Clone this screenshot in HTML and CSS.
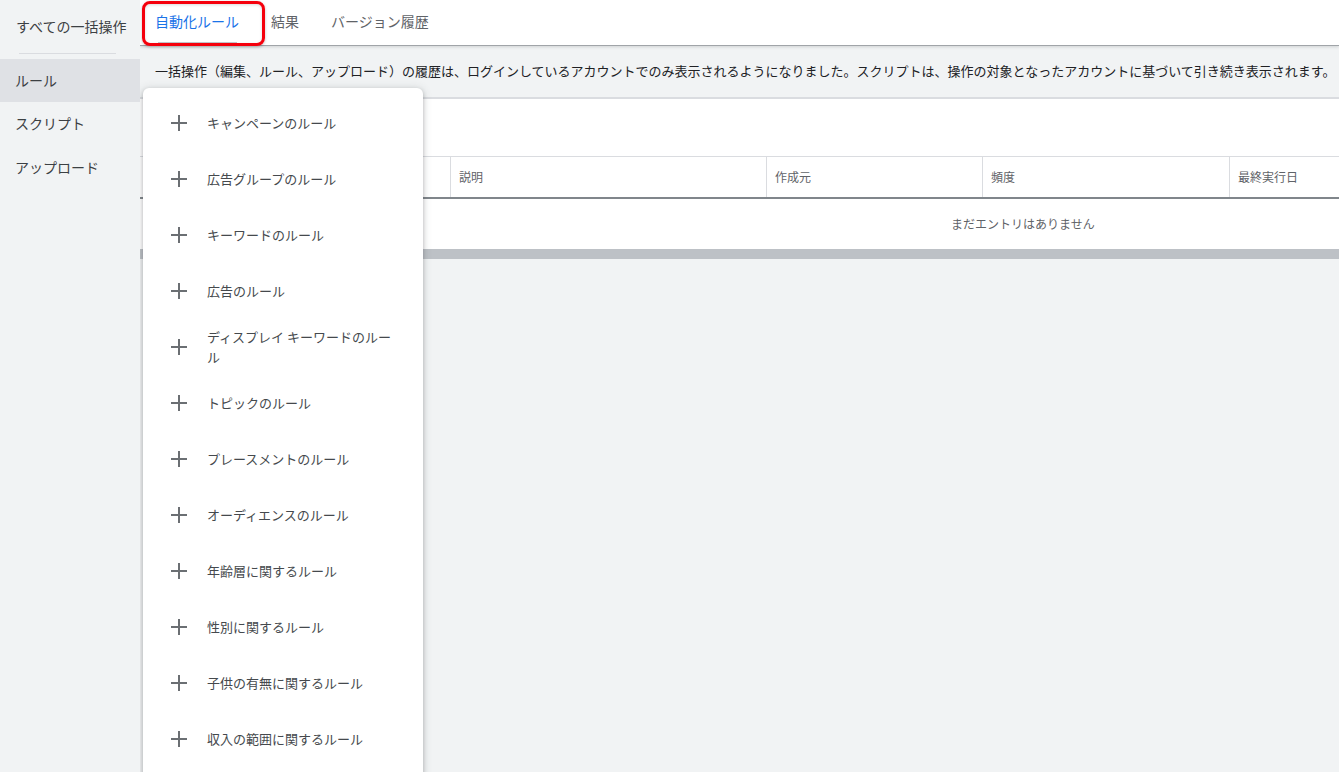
FILE: index.html
```html
<!DOCTYPE html>
<html lang="ja">
<head>
<meta charset="utf-8">
<title>一括操作 - ルール</title>
<link rel="stylesheet" href="styles.css">
</head>
<body>
<div class="app">
  <aside class="sidebar">
    <div class="side-title">すべての一括操作</div>
    <div class="side-divider"></div>
    <div class="side-item selected">ルール</div>
    <div class="side-item">スクリプト</div>
    <div class="side-item">アップロード</div>
  </aside>
  <main class="main">
    <nav class="tabs">
      <div class="tab active">自動化ルール</div>
      <div class="tab">結果</div>
      <div class="tab">バージョン履歴</div>
      <div class="annotation"></div>
    </nav>
    <div class="banner">一括操作（編集、ルール、アップロード）の履歴は、ログインしているアカウントでのみ表示されるようになりました。スクリプトは、操作の対象となったアカウントに基づいて引き続き表示されます。</div>
    <section class="card">
      <div class="toolbar"></div>
      <div class="thead">
        <div class="th"></div>
        <div class="th">説明</div>
        <div class="th">作成元</div>
        <div class="th">頻度</div>
        <div class="th">最終実行日</div>
      </div>
      <div class="empty">まだエントリはありません</div>
      <div class="hscroll"></div>
    </section>
    <div class="menu">
      <div class="menu-item"><svg class="plus" viewBox="0 0 16 16"><rect x="7" y="0" width="2" height="16"/><rect x="0" y="7" width="16" height="2"/></svg><span class="label">キャンペーンのルール</span></div>
      <div class="menu-item"><svg class="plus" viewBox="0 0 16 16"><rect x="7" y="0" width="2" height="16"/><rect x="0" y="7" width="16" height="2"/></svg><span class="label">広告グループのルール</span></div>
      <div class="menu-item"><svg class="plus" viewBox="0 0 16 16"><rect x="7" y="0" width="2" height="16"/><rect x="0" y="7" width="16" height="2"/></svg><span class="label">キーワードのルール</span></div>
      <div class="menu-item"><svg class="plus" viewBox="0 0 16 16"><rect x="7" y="0" width="2" height="16"/><rect x="0" y="7" width="16" height="2"/></svg><span class="label">広告のルール</span></div>
      <div class="menu-item"><svg class="plus" viewBox="0 0 16 16"><rect x="7" y="0" width="2" height="16"/><rect x="0" y="7" width="16" height="2"/></svg><span class="label">ディスプレイ キーワードのルール</span></div>
      <div class="menu-item"><svg class="plus" viewBox="0 0 16 16"><rect x="7" y="0" width="2" height="16"/><rect x="0" y="7" width="16" height="2"/></svg><span class="label">トピックのルール</span></div>
      <div class="menu-item"><svg class="plus" viewBox="0 0 16 16"><rect x="7" y="0" width="2" height="16"/><rect x="0" y="7" width="16" height="2"/></svg><span class="label">プレースメントのルール</span></div>
      <div class="menu-item"><svg class="plus" viewBox="0 0 16 16"><rect x="7" y="0" width="2" height="16"/><rect x="0" y="7" width="16" height="2"/></svg><span class="label">オーディエンスのルール</span></div>
      <div class="menu-item"><svg class="plus" viewBox="0 0 16 16"><rect x="7" y="0" width="2" height="16"/><rect x="0" y="7" width="16" height="2"/></svg><span class="label">年齢層に関するルール</span></div>
      <div class="menu-item"><svg class="plus" viewBox="0 0 16 16"><rect x="7" y="0" width="2" height="16"/><rect x="0" y="7" width="16" height="2"/></svg><span class="label">性別に関するルール</span></div>
      <div class="menu-item"><svg class="plus" viewBox="0 0 16 16"><rect x="7" y="0" width="2" height="16"/><rect x="0" y="7" width="16" height="2"/></svg><span class="label">子供の有無に関するルール</span></div>
      <div class="menu-item"><svg class="plus" viewBox="0 0 16 16"><rect x="7" y="0" width="2" height="16"/><rect x="0" y="7" width="16" height="2"/></svg><span class="label">収入の範囲に関するルール</span></div>
    </div>
  </main>
</div>
</body>
</html>
```
FILE: styles.css
```css
html, body {
  margin: 0;
  padding: 0;
  height: 100%;
  overflow: hidden;
}
body {
  font-family: "Noto Sans CJK JP", "Noto Sans", sans-serif;
  background: #f1f3f4;
  color: #3c4043;
}
.app {
  display: flex;
  height: 772px;
}
.sidebar {
  width: 140px;
  flex: none;
  background: #f1f3f4;
  padding-top: 6px;
  box-sizing: border-box;
}
.side-title {
  font-size: 14px;
  line-height: 40px;
  padding-left: 16px;
  color: #3c4043;
  white-space: nowrap;
}
.side-divider {
  height: 1px;
  background: #dadce0;
  margin: 7px 24px 5px 19px;
}
.side-item {
  height: 44px;
  line-height: 42px;
  font-size: 14px;
  padding-left: 15px;
  color: #3c4043;
}
.side-item.selected {
  background: #dfe1e5;
  height: 43px;
}
.main {
  flex: 1;
  min-width: 0;
  position: relative;
  background: #f1f3f4;
  overflow: hidden;
}
.tabs {
  position: relative;
  height: 45px;
  background: #fff;
  display: flex;
  padding-left: 0;
  box-shadow: 0 1px 0 #a0a4a8, 0 2px 3px rgba(60,64,67,.18);
  z-index: 1;
}
.tab {
  padding: 0 16px;
  font-size: 14px;
  line-height: 43px;
  color: #5f6368;
  position: relative;
}
.tab:first-child {
  padding-left: 15px;
}
.tab.active {
  color: #1a73e8;
}
.tab.active::after {
  content: "";
  position: absolute;
  left: 18px;
  right: 18px;
  bottom: 2px;
  height: 1px;
  background: #c4c7cc;
}
.annotation {
  position: absolute;
  left: 2px;
  top: 1px;
  width: 123px;
  height: 45px;
  box-sizing: border-box;
  border: 3.5px solid #f5000c;
  border-radius: 8px;
  box-shadow: 0 1px 3px rgba(0,0,0,.25), inset 0 1px 3px rgba(0,0,0,.15);
}
.banner {
  height: 52px;
  line-height: 51px;
  padding-left: 15px;
  font-size: 13px;
  color: #202124;
  white-space: nowrap;
  overflow: hidden;
  border-bottom: 2px solid #dadce0;
}
.card {
  background: #fff;
}
.toolbar {
  height: 57px;
  border-bottom: 1px solid #dadce0;
}
.thead {
  display: grid;
  grid-template-columns: 310px 316px 216px 247px 1fr;
  height: 40px;
  border-bottom: 2px solid #80868b;
}
.th {
  font-size: 12px;
  line-height: 40px;
  color: #5f6368;
  padding-left: 8px;
  border-left: 1px solid #dadce0;
  white-space: nowrap;
}
.th:first-child {
  border-left: none;
}
.empty {
  height: 50px;
  line-height: 50px;
  font-size: 12px;
  color: #5f6368;
  padding-left: 811px;
  white-space: nowrap;
}
.hscroll {
  height: 10px;
  background: #bdc1c6;
}
.menu {
  position: absolute;
  left: 3px;
  top: 88px;
  width: 280px;
  height: 700px;
  background: #fff;
  border-radius: 6px;
  padding-top: 7px;
  box-sizing: border-box;
  box-shadow: 0 2px 4px rgba(60,64,67,.3), 0 1px 8px 1px rgba(60,64,67,.15);
  z-index: 2;
}
.menu-item {
  display: flex;
  align-items: center;
  height: 56px;
  padding-left: 28px;
}
.plus {
  width: 16px;
  height: 16px;
  flex: none;
  fill: #6b6f73;
  margin-right: 20px;
}
.label {
  font-size: 13px;
  line-height: 20px;
  color: #45494d;
  width: 192px;
}
```
